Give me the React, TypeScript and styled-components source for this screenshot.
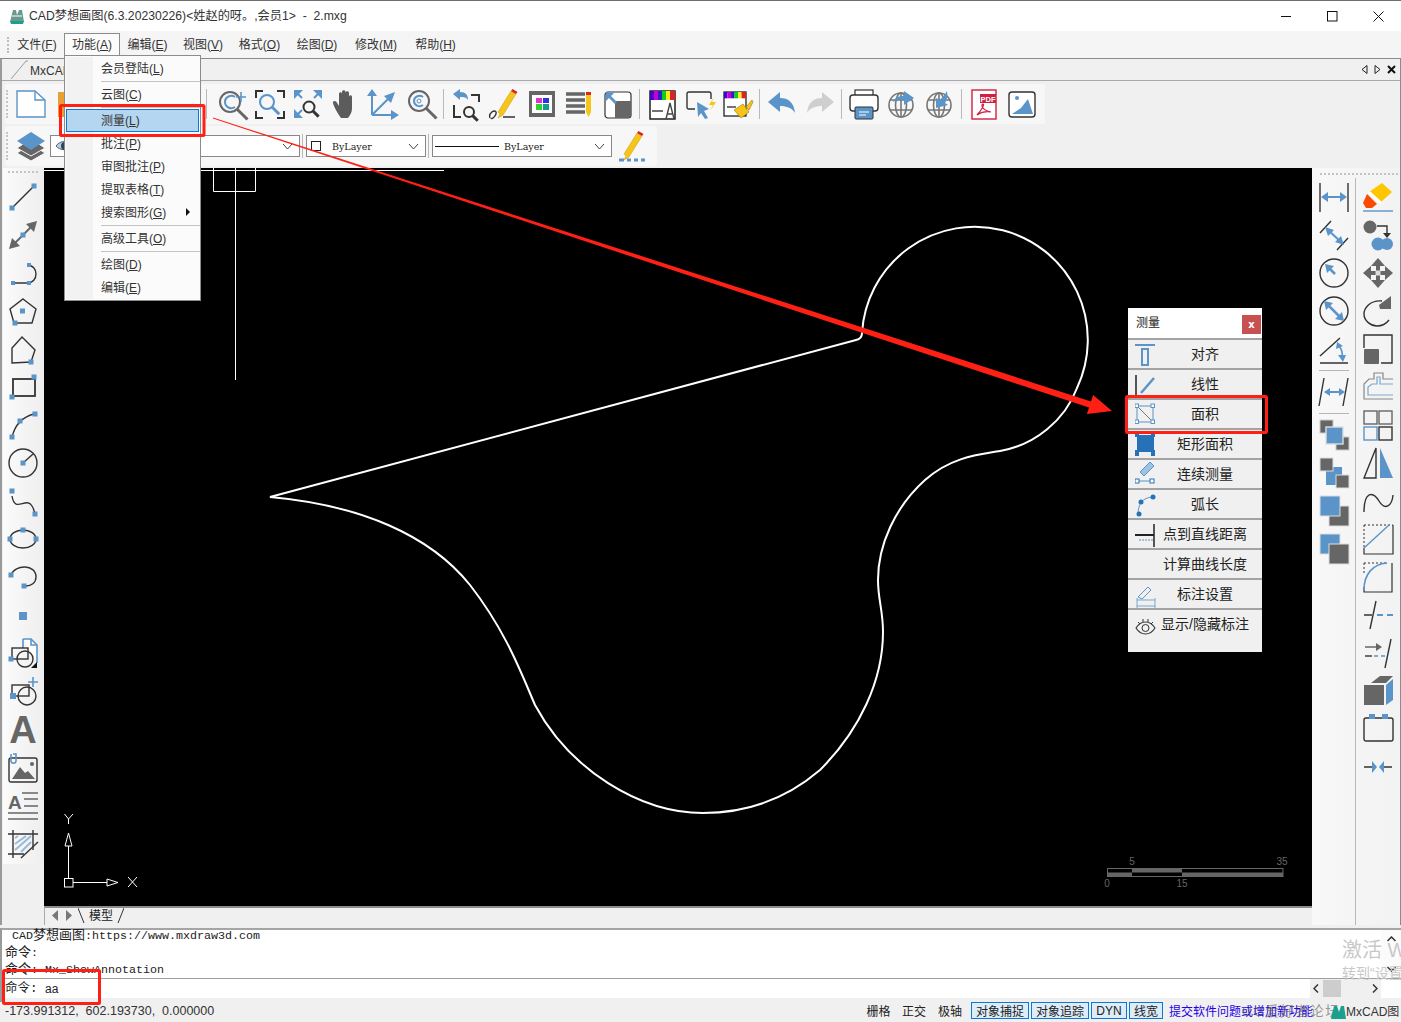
import React from "react";
import styled, { createGlobalStyle } from "styled-components";

const BLUE = "#5a94c8";
const DARK = "#333";
const GREY = "#666";
const YEL = "#f6c41c";

const Global = createGlobalStyle`
  html, body { margin: 0; padding: 0; background: #f0f0f0; }
  body { font-family: "Liberation Sans", "Noto Sans CJK SC", sans-serif; font-size: 12px; color: #222; }
  * { box-sizing: border-box; }
`;

const Page = styled.div`
  position: relative; width: 1401px; height: 1022px; overflow: hidden;
  display: flex; flex-direction: column; background: #f0f0f0; border-top: 1px solid #6e6e6e;
`;
const TitleBar = styled.header`
  height: 30px; flex: none; background: #fff; display: flex; align-items: center; padding-left: 9px;
`;
const TitleText = styled.span` margin-left: 4px; font-size: 12.2px; color: #333; white-space: pre; padding-bottom: 3px; `;
const WinControls = styled.div` margin-left: auto; display: flex; `;
const WinButton = styled.div`
  width: 46px; height: 30px; display: flex; align-items: center; justify-content: center;
`;
const MenuBar = styled.nav`
  height: 27px; flex: none; background: #f5f5f5; display: flex; align-items: center; padding-left: 7px; position: relative;
`;
const Grip = styled.i`
  width: 2px; height: 16px; flex: none; border-left: 2px dotted #bbb; margin-right: 5px;
`;
const MenuItem = styled.div<{ $open?: boolean; $w: number }>`
  width: ${p => p.$w}px; height: 25px; margin-top: 2px; padding-bottom: 5px; display: flex; align-items: center; justify-content: center;
  font-size: 12px; color: #333; white-space: nowrap;
  border: 1px solid ${p => (p.$open ? "#8c8c8c" : "transparent")};
  border-bottom: none; background: ${p => (p.$open ? "#fbfbfb" : "transparent")};
`;
const DocArea = styled.div`
  flex: 1; min-height: 0; display: flex; flex-direction: column; border-top: 1px solid #8a8a93; border-left: 2px solid #9a9a9a; border-right: 1px solid #8a8a93;
`;
const TabStrip = styled.div`
  height: 22px; flex: none; display: flex; align-items: flex-end; border-bottom: 1px solid #a8a8ae; padding-left: 9px; background: #f0f0f0;
`;
const DocTab = styled.div`
  height: 21px; display: flex; align-items: center; font-size: 12px; color: #333; gap: 2px;
`;
const DocTabName = styled.span` padding-top: 3px; `;
const TabArrows = styled.div`
  margin-left: auto; height: 21px; display: flex; align-items: center; gap: 6px; padding-right: 4px;
`;
const ToolBand = styled.section`
  height: 87px; flex: none; background: #f0f0f0; display: flex; flex-direction: column; gap: 2px; padding: 3px 0 0 3px; 
`;
const ToolRow = styled.div<{ $w: number }>`
  width: ${p => p.$w}px; height: 40px; display: flex; align-items: center; background: #f7f7f7; border-radius: 3px; padding-left: 1px;
`;
const HGrip = styled.i` width: 2px; height: 28px; border-left: 2px dotted #c4c4c4; margin-right: 4px; flex: none; `;
const ToolBtn = styled.div`
  width: 38px; height: 34px; flex: none; display: flex; align-items: center; justify-content: center;
`;
const Sep = styled.i<{ $wide?: boolean }>`
  width: 1px; height: 30px; background: #b9b9b9; flex: none; margin: 0 ${p => (p.$wide ? "6px" : "3px")} 0 ${p => (p.$wide ? "6px" : "2px")};
`;
const ComboSep = styled.i` width: 1px; height: 24px; background: #b9b9b9; flex: none; margin: 0 2px; `;
const RowGap = styled.i<{ $w: number }>` width: ${p => p.$w}px; flex: none; `;
const Combo = styled.div<{ $w: number }>`
  width: ${p => p.$w}px; height: 22px; flex: none; background: #fff; border: 1px solid #888; display: flex; align-items: center;
  padding: 0 6px 0 4px; font-family: "DejaVu Serif", "Noto Sans CJK SC", serif; font-size: 9.5px; color: #222; gap: 8px;
`;
const Swatch = styled.i` width: 10px; height: 10px; border: 1px solid #222; flex: none; margin-right: 3px; `;
const LineSample = styled.i` width: 64px; border-top: 1px solid #111; flex: none; margin: 0 -3px 0 -2px; `;
const Chevron = styled.svg` margin-left: auto; flex: none; `;
const Work = styled.div` flex: 1; min-height: 0; display: flex; `;
const LeftBar = styled.aside`
  width: 42px; flex: none; background: #f0f0f0; padding: 0 0 0 1px;
`;
const LeftTools = styled.div`
  background: linear-gradient(90deg, #fbfbfb, #eeeeee); display: flex; flex-direction: column; align-items: center; padding: 3px 1px 0 0; height: 696px; width: 41px;
`;
const TopGrip = styled.i` width: 30px; height: 2px; border-top: 2px dotted #c4c4c4; flex: none; margin: 0 0 5px; `;
const SideBtn = styled.div`
  width: 38px; height: 38px; flex: none; display: flex; align-items: center; justify-content: center;
`;
const Center = styled.main` flex: 1; min-width: 0; display: flex; flex-direction: column; `;
const Canvas = styled.svg` flex: 1; min-height: 0; width: 100%; background: #000; display: block; `;
const ModelTabs = styled.div`
  height: 19px; flex: none; border-top: 2px solid #8c8c8c; border-left: 1px solid #aaa; background: #f0f0f0; display: flex; align-items: center; padding: 0 0 2px 4px;
`;
const NavBox = styled.div` display: flex; align-items: center; gap: 6px; width: 29px; height: 15px; padding-left: 2px; `;
const ModelName = styled.span` font-size: 12px; color: #222; padding: 0 4px 3px 4px; `;
const RightBar = styled.aside`
  width: 88px; flex: none; background: linear-gradient(90deg, #f8f8f8, #f2f2f2); display: flex; flex-direction: column; padding-top: 5px;
`;
const RightColumns = styled.div` display: flex; flex: 1; padding-top: 3px; `;
const RightCol = styled.div<{ $line?: boolean }>`
  width: 44px; display: flex; flex-direction: column; align-items: center;
  border-right: ${p => (p.$line ? "1px solid #b8b8b8" : "none")}; flex: none;
`;
const ColSep = styled.i` width: 30px; height: 1px; margin: 2px 0; background: #b5b5b5; flex: none; `;
const GripRight = styled.i` width: 78px; margin-left: 8px; height: 2px; border-top: 2px dotted #c4c4c4; flex: none; `;
const CmdPanel = styled.section`
  height: 74px; flex: none; border-top: 2px solid #a5a5a5; margin-top: 3px; background: #fff; display: flex; flex-direction: column; border-left: 2px solid #9a9a9a; position: relative;
`;
const History = styled.div`
  height: 49px; flex: none; padding: 0 0 0 3px; font-family: "Liberation Mono", "Noto Sans CJK SC", monospace; font-size: 11.67px; line-height: 12px; color: #222; border-bottom: 1px solid #9f9f9f; position: relative; white-space: pre;
`;
const HistoryLine = styled.div` height: 17px; `;
const Cjk = styled.span` font-size: 13px; `;
const VScroll = styled.div`
  position: absolute; right: 0; top: 0; bottom: 0; width: 20px; display: flex; flex-direction: column; justify-content: space-between; align-items: center; padding: 6px 0; background: rgba(245,245,245,.4);
`;
const InputRow = styled.div`
  height: 19px; flex: none; display: flex; align-items: center; padding-left: 3px; font-size: 12px; color: #222; position: relative;
`;
const Prompt = styled.span` font-family: "Liberation Mono", "Noto Sans CJK SC", monospace; font-size: 12.5px; width: 40px; flex: none; padding-bottom: 4px; `;
const HScroll = styled.div`
  position: absolute; right: 20px; top: 0; width: 71px; height: 19px; background: #f0f0f0; display: flex; align-items: center; justify-content: space-between; padding: 0 3px;
`;
const Thumb = styled.i` width: 18px; height: 17px; background: #cdcdcd; flex: none; margin-left: -12px; margin-right: 16px; `;
const CmdFoot = styled.i` flex: 1; background: #f0f0f0; `;
const StatusBar = styled.footer`
  height: 20px; flex: none; display: flex; align-items: center; padding: 0 0 3px 5px; background: #f0f0f0; font-size: 12px; color: #222; position: relative; white-space: nowrap;
`;
const Coords = styled.span` white-space: pre; width: 861px; flex: none; color: #333; font-size: 12.5px; `;
const StatusBtn = styled.span<{ $on?: boolean; $w: number }>`
  width: ${p => p.$w}px; height: 17px; flex: none; display: flex; align-items: center; justify-content: center; margin-right: 2px;
  border: 1px solid ${p => (p.$on ? "#0a78d4" : "transparent")}; background: ${p => (p.$on ? "#dcecf8" : "transparent")}; color: #222; letter-spacing: 0;
`;
const StatusLink = styled.span` color: #2200e8; margin-left: 4px; `;
const StatusBrand = styled.span` margin-left: 33px; color: #333; `;
const Watermark = styled.span`
  position: absolute; left: 1242px; top: -2px; font-size: 13.5px; color: rgba(90,90,90,.62); letter-spacing: 1.5px;
`;
const BrandLogo = styled.svg` position: absolute; left: 1331px; top: 3px; `;
const ActivateBig = styled.div`
  position: absolute; left: 1342px; top: 933px; font-size: 20px; color: #c8c8c8; white-space: nowrap;
`;
const ActivateSmall = styled.div`
  position: absolute; left: 1342px; top: 961px; font-size: 14px; color: #c8c8c8; white-space: nowrap;
`;
const Dropdown = styled.div`
  position: absolute; left: 64px; top: 54px; width: 137px; height: 246px; background: #fbfbfb; border: 1px solid #8c8c8c; padding-top: 1px; display: flex; flex-direction: column;
  &::before { content: ""; position: absolute; left: 1px; top: 1px; bottom: 1px; width: 27px; background: #f2f2f2; }
`;
const DropItem = styled.div<{ $active?: boolean }>`
  position: relative; height: 23px; flex: none; display: flex; align-items: center; padding: 0 0 2px 34px; font-size: 12px; color: #333; white-space: nowrap;
  border: 1px solid ${p => (p.$active ? "#0a78d4" : "transparent")}; margin: 0 1px; background: ${p => (p.$active ? "#b4d6f1" : "transparent")};
`;
const SubArrow = styled.i`
  position: absolute; right: 8px; top: 6px; border-left: 4px solid #111; border-top: 4px solid transparent; border-bottom: 4px solid transparent;
`;
const DropSep = styled.i` height: 3px; flex: none; margin-left: 36px; border-top: 1px solid #c4c4c4; margin-top: 1px; margin-bottom: -1px; `;
const Palette = styled.div`
  position: absolute; left: 1128px; top: 307px; width: 134px; height: 344px; background: #f0f0f0; display: flex; flex-direction: column;
`;
const PaletteHead = styled.div`
  height: 30px; flex: none; background: #fff; display: flex; align-items: center; padding: 0 1px 0 8px; font-size: 12px; color: #222; justify-content: space-between;
`;
const PaletteTitle = styled.span` padding-bottom: 3px; `;
const CloseBtn = styled.div`
  width: 19px; height: 19px; background: #c75050; color: #fff; font-size: 10px; font-weight: 700; display: flex; align-items: center; justify-content: center; font-family: "DejaVu Sans", sans-serif; margin-top: 2px;
`;
const PaletteRow = styled.div`
  position: relative; height: 30px; flex: none; border-top: 2px solid #a3a3a3; background: #f0f0f0; display: flex; align-items: center; justify-content: center; padding: 0 0 2px 20px; font-size: 14px; color: #222; white-space: nowrap;
`;
const PaletteIcon = styled.svg` position: absolute; left: 7px; bottom: -1px; `;
const Annotation = styled.svg` position: absolute; left: 0; top: -1px; pointer-events: none; `;
const Ic = styled.svg` display: block; overflow: visible; `;

const Sq = ({ x, y, s = 5, c = BLUE }: { x: number; y: number; s?: number; c?: string }) => (
  <rect x={x - s / 2} y={y - s / 2} width={s} height={s} fill={c} />
);
const S = { fill: "none", stroke: DARK, strokeWidth: 1.4 };
const SB = { fill: "none", stroke: BLUE, strokeWidth: 1.6 };
const Mag = ({ x, y, r = 8, c = GREY, w = 2 }: { x: number; y: number; r?: number; c?: string; w?: number }) => (
  <g>
    <circle cx={x} cy={y} r={r} fill="none" stroke={c} strokeWidth={w} />
    <line x1={x + r * 0.72} y1={y + r * 0.72} x2={x + r * 1.75} y2={y + r * 1.75} stroke={c} strokeWidth={w + 1} />
  </g>
);
const Bars = () => (
  <g>
    <rect x="0" y="0" width="4" height="9" fill="#40c" />
    <rect x="4" y="0" width="4" height="9" fill="#c0c" />
    <rect x="8" y="0" width="4" height="9" fill="#22c" />
    <rect x="12" y="0" width="4" height="9" fill="#1c1" />
    <rect x="16" y="0" width="4" height="9" fill="#ee2" />
    <rect x="20" y="0" width="5" height="9" fill="#d22" />
  </g>
);
const Globe = () => (
  <g fill="none" stroke="#777" strokeWidth="1.6">
    <circle cx="14" cy="16" r="12" />
    <ellipse cx="14" cy="16" rx="5.5" ry="12" />
    <path d="M3 11H25M3 21H25M14 4V28" />
  </g>
);
const Pencil = () => (
  <g>
    <path d="M9 25L7 23 20 2 25 5 12 26 7 29Z" fill={YEL} stroke="#c99b00" strokeWidth=".5" />
    <path d="M20 2l1.5-2 5 3-1.5 2Z" fill="#d22" />
  </g>
);

const icons: Record<string, React.ReactNode> = {
  line: <g><line x1="5" y1="25" x2="25" y2="5" {...S} /><Sq x={4} y={26} /><Sq x={26} y={4} /></g>,
  dbl: <g><line x1="6" y1="24" x2="24" y2="6" stroke={GREY} strokeWidth="2" /><path d="M1 29L4 18 12 26Z" fill={GREY} /><path d="M29 1L18 4 26 12Z" fill={GREY} /><Sq x={15} y={15} /></g>,
  hook: <g><path d="M5 25H19C31 25 31 7 19 7" {...S} /><Sq x={5} y={25} s={4} /><Sq x={21} y={25} s={4} /><Sq x={21} y={7} s={4} /></g>,
  penta: <g><path d="M15 3L28 13 24 27H6L2 13Z" {...S} /><Sq x={14.5} y={15} /><Sq x={7} y={27} /></g>,
  poly: <g><path d="M14 3L27 16 23 28 4 29V14Z" {...S} /><Sq x={23} y={28} /></g>,
  rect: <g><rect x="5" y="7" width="22" height="17" {...S} strokeWidth={1.8} /><Sq x={26} y={5} /><Sq x={4} y={25} /></g>,
  arc: <g><path d="M4 27C7 15 14 7 26 4" {...S} /><Sq x={4} y={27} /><Sq x={12} y={11} /><Sq x={27} y={4} /></g>,
  circ: <g><circle cx="15" cy="15" r="14" {...S} /><line x1="15" y1="15" x2="25" y2="6" {...S} /><Sq x={15} y={15} /></g>,
  spline: <g><path d="M4 10C7 28 18 10 24 20 27 25 27 28 27 30" {...S} /><Sq x={4} y={5} /><Sq x={27} y={28} /></g>,
  ellipse: <g><ellipse cx="15" cy="15" rx="13" ry="9" {...S} /><Sq x={15} y={6} /><Sq x={2} y={15} /><Sq x={28} y={15} /></g>,
  earc: <g><path d="M3 13C7 2 28 2 28 15 28 21 23 24 18 24" {...S} /><Sq x={3} y={13} /><Sq x={16} y={24} /></g>,
  point: <Sq x={15} y={16} s={8} />,
  block: <g><path d="M15 1H23L29 7V25" fill="#fff" stroke={BLUE} strokeWidth="1.6" /><path d="M15 1V10M23 1V7H29" {...SB} /><rect x="4" y="10" width="16" height="11" {...S} /><circle cx="17" cy="21" r="8" {...S} /><Sq x={3} y={21} /><path d="M29 24V30H23Z" fill="#111" /></g>,
  blockadd: <g><path d="M25 1V11M20 6H30" {...SB} /><rect x="4" y="9" width="17" height="11" {...S} /><circle cx="19" cy="20" r="9" {...S} /><Sq x={5} y={20} s={6} /></g>,
  text: <text x="15" y="29" textAnchor="middle" fontFamily="Liberation Sans" fontWeight="700" fontSize="38" fill={GREY}>A</text>,
  image: <g><rect x="1" y="6" width="28" height="24" rx="2" {...S} /><path d="M4 27L12 15 17 21 20 19 27 27Z" fill={GREY} /><circle cx="24" cy="12" r="2" fill={GREY} /><path d="M3 2V9C3 12 8 12 8 9V2H5" {...SB} /></g>,
  mtext: <g><text x="0" y="19" fontFamily="Liberation Sans" fontWeight="700" fontSize="19" fill={GREY}>A</text><path d="M14 3H30M16 9H30M16 16H30M0 23H30M0 29H30" fill="none" stroke={GREY} strokeWidth="1.4" /></g>,
  hatch: <g><path d="M5 2V30M25 2V22M0 6H30M0 26H16" {...S} /><path d="M7 22L23 8M7 16L18 8M13 24L23 14M7 10L10 8" stroke={BLUE} strokeWidth="2" opacity=".6" /><path d="M13 30L30 14" {...S} /></g>,
  fnew: <g><path d="M1 2H19L29 11V28H1Z" fill="#fff" stroke={BLUE} strokeWidth="1.4" /><path d="M19 2V11H29" fill="none" stroke={BLUE} strokeWidth="1.4" /></g>,
  fopen: <rect x="4" y="3" width="24" height="25" fill="#e8a030" />,
  zplus: <g><Mag x={13} y={13} r={10} /><path d="M18 8C14 5 8 8 8 13S14 21 18 18" {...SB} strokeWidth={2} /><path d="M24 3V13M19 8H29" {...SB} /></g>,
  zwin: <g><path d="M8 2H1V9M22 2H29V9M8 29H1V22M22 29H29V22" fill="none" stroke={DARK} strokeWidth="2" /><Mag x={12} y={13} r={7} c={BLUE} /></g>,
  zext: <g><path d="M1 1H10L1 10ZM29 1V10L20 1ZM1 29V20L10 29Z" fill={BLUE} /><path d="M3 3L9 9M27 3L21 9M3 27L9 21" stroke={BLUE} strokeWidth="2" /><Mag x={16} y={18} r={5.5} c="#333" /></g>,
  pan: <path d="M10 29C7 25 3 18 2 14c-.5-2 2-3 3.500-1l2.500 4V5c0-2.500 3-2.500 3 0v8V3c0-2.500 3.500-2.500 3.500 0v10V4c0-2.500 3.500-2.500 3.500 0v10V8c0-2.500 3-2.500 3 0v11c0 5-2 7-4 10Z" fill="#5c5c5c" />,
  ucs: <g><path d="M3 26V5M3 26H25M3 26L21 8" fill="none" stroke={BLUE} strokeWidth="2" /><path d="M3 0L8 7H-2ZM30 26L22 21V31ZM26 3L15 7 22 14Z" fill={BLUE} /></g>,
  zcirc: <g><Mag x={12} y={12} r={10} /><path d="M16 8C12 5 7 8 7 12S12 19 16 16" {...SB} strokeWidth={2} /><circle cx="12" cy="12" r="2" fill="none" stroke={BLUE} /></g>,
  zprev: <g><path d="M20 6H28V13M3 16V28H10" fill="none" stroke={DARK} strokeWidth="2" /><Mag x={18} y={23} r={5} c="#333" /><path d="M2 5L9 0V3C15 3 17 6 17 11 15 8 13 8 9 8V11Z" fill={BLUE} /></g>,
  sign: <g transform="translate(2 0)"><Pencil /><path d="M-1 29C-3 24 4 20 5 23S1 31 0 29M12 28H24" fill="none" stroke={DARK} strokeWidth="1.4" /></g>,
  table: <g><rect x="2" y="2" width="26" height="26" fill={GREY} /><rect x="5" y="6" width="20" height="18" fill="#fff" /><rect x="9" y="9" width="6" height="5" fill="#e030d0" /><rect x="16" y="9" width="6" height="5" fill="#3030e0" /><rect x="9" y="15" width="6" height="6" fill="#30d030" /><rect x="16" y="15" width="6" height="6" fill="#10a090" /></g>,
  llist: <g><path d="M1 5H20M1 11H20M1 17H20M1 23H20" stroke={GREY} strokeWidth="3.500" /><path d="M21 6H26V23L23.500 28 21 23Z" fill={YEL} /><rect x="21" y="3" width="5" height="3" fill="#d22" /></g>,
  split: <g><rect x="2" y="3" width="26" height="26" rx="3" fill="#fff" stroke={DARK} strokeWidth="1.2" /><path d="M12 12H28V26Q28 29 25 29H12Z" fill={GREY} /><path d="M3 3L11 4 8 7 14 13 12 15 6 9 3 12Z" fill={BLUE} /></g>,
  colorA: <g><rect x="3" y="2" width="25" height="28" fill="#fff" stroke="#111" strokeWidth="1.4" /><g transform="translate(3 2)"><Bars /></g><path d="M5 22H16M19 30L23 14 27 30M21 25H25" fill="none" stroke="#444" strokeWidth="1.400" /></g>,
  select: <g><path d="M10 20H4Q2 20 2 18V5Q2 3 4 3H24Q26 3 26 5V10" fill="none" stroke={DARK} strokeWidth="1.4" /><path d="M12 13L24 20 19 22 23 29 20 30 16 24 13 28Z" fill={BLUE} /><path d="M29 8L24 16H28L25 22 31 13H27Z" fill={YEL} /></g>,
  brush: <g><rect x="1" y="3" width="22" height="24" fill="#fff" stroke="#111" strokeWidth="1.200" /><g transform="translate(1 3) scale(.88 .7)"><Bars /></g><path d="M4 18H13" stroke="#444" strokeWidth="1.5" /><path d="M11 21L20 15 26 23 18 29Z" fill={YEL} stroke="#a07800" strokeWidth=".6" /><path d="M23 18L29 11 30 13 26 21Z" fill={YEL} stroke="#a07800" strokeWidth=".6" /></g>,
  undo: <path d="M1 13L13 3V9C21 9 27 13 28 24 25 19 20 17 13 17V23Z" fill={BLUE} />,
  redo: <path d="M29 13L17 3V9C9 9 3 13 2 24 5 19 10 17 17 17V23Z" fill="#cfcfcf" />,
  print: <g><rect x="6" y="1" width="18" height="8" fill="#fff" stroke={DARK} strokeWidth="1.2" /><rect x="1" y="6" width="28" height="16" rx="3" fill="#fff" stroke={DARK} strokeWidth="1.4" /><rect x="6" y="18" width="18" height="12" rx="1" fill={BLUE} stroke={DARK} strokeWidth="1" /><path d="M10 23H20M10 26H17" stroke="#fff" strokeWidth="1.200" /></g>,
  gout: <g><Globe /><path d="M6 13C8 8 12 7 17 7V2L27 9 17 16V11C13 11 10 11 6 13Z" fill={BLUE} /></g>,
  gin: <g><Globe /><path d="M22 2C23 7 22 11 20 14L23 16 11 19 11 9 15 11C17 8 20 6 22 2Z" fill={BLUE} /></g>,
  pdf: <g><rect x="3" y="1" width="24" height="29" fill="#fff" stroke="#d02040" strokeWidth="1.4" /><rect x="11" y="5" width="16" height="9" fill="#d02040" /><text x="19" y="12.500" textAnchor="middle" fontFamily="Liberation Sans" fontWeight="700" fontSize="7.500" fill="#fff">PDF</text><path d="M8 26C12 22 16 15 14 15S12 21 22 23C16 22 11 24 8 26Z" fill="none" stroke="#d02040" strokeWidth="1.200" /></g>,
  pic: <g><rect x="2" y="3" width="26" height="25" rx="3" fill="#fff" stroke={DARK} strokeWidth="1.400" /><path d="M5 25L14 19 21 10 26 25Z" fill={BLUE} /><circle cx="10" cy="9" r="2" fill={BLUE} /></g>,
  layers: <g><path d="M1 22L15 13 29 22 15 30Z" fill={GREY} stroke="#f7f7f7" /><path d="M1 17L15 8 29 17 15 25Z" fill={GREY} stroke="#f7f7f7" /><path d="M1 10L15 1 29 10 15 19Z" fill={BLUE} /></g>,
  penline: <g><Pencil /><path d="M2 29H7M10 29H14M17 29H21M24 29H28" stroke={BLUE} strokeWidth="3" /></g>,
  dimH: <g><path d="M1 1V30M29 1V30" {...S} /><path d="M5 15H25" {...SB} strokeWidth={2} /><path d="M2 15L9 10V20ZM28 15L21 10V20Z" fill={BLUE} /></g>,
  dimA: <g><path d="M1 13L12 1M18 30L29 18" {...S} /><path d="M8 9L23 23" {...SB} strokeWidth={2} /><path d="M6 7L15 10 9 16ZM25 25L16 22 22 16Z" fill={BLUE} /></g>,
  dimR: <g><circle cx="15" cy="15" r="14" {...S} /><path d="M8 8L16 16" {...SB} strokeWidth={2.500} /><path d="M6 6L15 8 8 15Z" fill={BLUE} /></g>,
  dimD: <g><circle cx="15" cy="15" r="14" {...S} /><path d="M8 8L22 22" {...SB} strokeWidth={2.500} /><path d="M5 5L14 7 7 14ZM25 25L16 23 23 16Z" fill={BLUE} /></g>,
  dimAng: <g><path d="M1 22L21 4M1 29H29" {...S} /><path d="M19 11C23 15 24 19 23 24" {...SB} /><path d="M18 8L24 12 17 15ZM24 28L19 21 27 21Z" fill={BLUE} /></g>,
  dimJ: <g><path d="M5 1L0 29M29 1L24 29" {...S} /><path d="M6 15H24" {...SB} strokeWidth={2} /><path d="M5 15L11 11V19ZM26 15L20 11V19Z" fill={BLUE} /></g>,
  cp1: <g><rect x="1" y="0" width="13" height="13" fill={GREY} stroke="#ccc" /><rect x="17" y="17" width="13" height="13" fill={GREY} stroke="#ccc" /><rect x="7" y="7" width="17" height="17" fill={BLUE} stroke="#ddd" strokeWidth="1.400" /></g>,
  cp2: <g><rect x="7" y="9" width="16" height="18" fill={BLUE} /><rect x="1" y="0" width="13" height="13" fill={GREY} stroke="#ddd" /><rect x="17" y="17" width="13" height="13" fill={GREY} stroke="#ddd" /></g>,
  cp3: <g><rect x="10" y="10" width="20" height="20" fill={GREY} stroke="#ddd" /><rect x="1" y="0" width="20" height="20" fill={BLUE} stroke="#ddd" /></g>,
  cp4: <g><rect x="1" y="0" width="20" height="20" fill={BLUE} stroke="#ddd" /><rect x="10" y="10" width="20" height="20" fill={GREY} stroke="#ddd" /></g>,
  eraser: <g><path d="M19 1L29 10 18 20 6 10Z" fill="#ffc600" /><path d="M4 12L14 22 9 26H3L0 21Z" fill="#f84a00" /><path d="M6 10L18 21" stroke="#fff" strokeWidth="2.500" /><path d="M0 29H30" stroke={BLUE} strokeWidth="1.400" /></g>,
  match: <g><circle cx="7" cy="7" r="6.500" fill={GREY} /><path d="M14 6H24V14" fill="none" stroke={DARK} strokeWidth="1.400" /><path d="M20 13H28L24 18Z" fill={DARK} /><circle cx="15" cy="24" r="6.500" fill={BLUE} /><path d="M22 18A6.500 6.500 0 0 1 22 30" fill="none" stroke="#fff" /><circle cx="24" cy="24" r="6" fill={BLUE} /></g>,
  move: <g><path d="M15 0L22 8H8ZM15 30L22 22H8ZM0 15L8 8V22ZM30 15L22 8V22Z" fill={GREY} /><path d="M15 5V25M5 15H25" stroke={GREY} strokeWidth="4" /><rect x="12.500" y="12.500" width="5" height="5" fill="#ddd" /></g>,
  rotate: <g><path d="M19 5C6 4 1 13 1 18 1 25 8 30 14 30 20 30 23 28 26 24" fill="none" stroke={DARK} strokeWidth="1.400" /><path d="M16 9L28 0V13H17Z" fill={GREY} /></g>,
  scale: <g><path d="M1 14V1H29V29H18" fill="none" stroke={DARK} strokeWidth="1.400" /><rect x="1" y="15" width="15" height="15" rx="1" fill={GREY} /></g>,
  offset: <g><path d="M30 7H20V1H11V7H6L1 12V27H30" fill="none" stroke="#888" strokeWidth="1.200" /><path d="M30 12H17V5H14V12H9L5 15V23H30" fill="none" stroke={BLUE} strokeWidth="1.200" opacity=".8" /></g>,
  array: <g fill="none" stroke={GREY} strokeWidth="1.400"><rect x="1" y="1" width="13" height="13" /><rect x="16" y="1" width="13" height="13" /><rect x="1" y="17" width="13" height="13" stroke={BLUE} /><rect x="16" y="17" width="13" height="13" stroke="#333" /></g>,
  mirror: <g><path d="M13 0V30H1Z" fill="none" stroke={DARK} strokeWidth="1.400" /><path d="M17 0V30H30Z" fill={BLUE} /></g>,
  wave: <path d="M1 26C1 5 10 5 16 15S29 20 30 9" fill="none" stroke={DARK} strokeWidth="1.400" />,
  chamfer: <g><path d="M30 1V30H1V24" fill="none" stroke={DARK} strokeWidth="1.200" /><path d="M1 1H30M1 1V24" fill="none" stroke={DARK} strokeDasharray="2 2" /><path d="M1 24L26 1" stroke={BLUE} strokeWidth="1.400" /></g>,
  fillet: <g><path d="M29 1V30H1V25" fill="none" stroke={DARK} strokeWidth="1.200" /><path d="M1 1H24M1 1V12" fill="none" stroke={DARK} strokeDasharray="2 2" /><path d="M1 28C1 12 10 2 24 1" {...SB} /></g>,
  brk: <g><path d="M13 1L7 29M1 15H9" {...S} /><path d="M14 15H20M24 15H30" {...SB} strokeWidth={2} /></g>,
  extend: <g><path d="M2 9H16" stroke={GREY} strokeWidth="1.500" /><path d="M19 9L13 5V13Z" fill={GREY} /><path d="M2 18H9" {...S} /><path d="M11 18H15M18 18H22" {...SB} /><path d="M28 1L22 30" {...S} /></g>,
  box3d: <g><path d="M8 7L17 0H30L23 7Z" fill={GREY} /><rect x="1" y="9" width="20" height="20" fill={GREY} /><path d="M23 9L30 3V24L23 29Z" fill={BLUE} /></g>,
  group: <g><rect x="1" y="4" width="29" height="23" rx="2" {...S} /><rect x="6" y="0" width="6" height="5" fill={BLUE} /><rect x="19" y="0" width="6" height="5" fill={BLUE} /></g>,
  join: <g><path d="M1 15H11M19 15H29" {...S} /><path d="M14 15L9 9V21ZM16 15L21 9V21Z" fill={BLUE} /></g>,
};

const Icon = ({ n }: { n: string }) => (
  <Ic width="30" height="30" viewBox="0 0 30 30">{icons[n]}</Ic>
);

const palIcons: Record<string, React.ReactNode> = {
  align: <g><path d="M0 6H20" stroke={BLUE} strokeWidth="2" /><rect x="7" y="10" width="6" height="16" fill="none" stroke={BLUE} strokeWidth="2" /></g>,
  linear: <g><path d="M1 6V28" stroke="#222" strokeWidth="1.500" /><path d="M6 24L19 9" stroke={BLUE} strokeWidth="2.500" /></g>,
  area: <g><rect x="2" y="7" width="16" height="16" fill="none" stroke={BLUE} strokeWidth="1" /><path d="M2 7L18 23" stroke="#777" strokeWidth="1" /><g fill="#fff" stroke={BLUE}><rect x="0" y="5" width="3.500" height="3.500" /><rect x="16" y="5" width="3.500" height="3.500" /><rect x="0" y="21" width="3.500" height="3.500" /><rect x="16" y="21" width="3.500" height="3.500" /></g></g>,
  rectArea: <g><rect x="2" y="6" width="17" height="17" fill="#2572b8" /><rect x="0" y="3" width="4" height="5" fill="#2572b8" /><rect x="16" y="3" width="4" height="5" fill="#2572b8" /><rect x="0" y="21" width="4" height="6" fill="#2572b8" /><rect x="16" y="21" width="4" height="6" fill="#2572b8" /></g>,
  cont: <g><path d="M5 13L15 3 19 7 9 17Z" fill="#9cc3e4" stroke={BLUE} /><path d="M2 22H18" stroke={BLUE} /><rect x="0" y="20" width="4" height="4" fill="#fff" stroke="#2572b8" /><rect x="15" y="20" width="4" height="4" fill="#fff" stroke="#2572b8" /></g>,
  arcLen: <g><path d="M3 26C3 14 8 9 17 8" fill="none" stroke={BLUE} /><circle cx="4" cy="25" r="2.500" fill="#2572b8" /><circle cx="6" cy="13" r="2.500" fill="#2572b8" /><circle cx="18" cy="8" r="2.500" fill="#2572b8" /></g>,
  dist: <g><path d="M19 5V28" stroke="#222" strokeWidth="1.500" /><path d="M0 16H19" stroke="#222" strokeWidth="2" /><path d="M4 21H18" stroke={BLUE} strokeDasharray="2 1" /></g>,
  none: null,
  setting: <g><path d="M3 18L13 8 16 11 7 20Z" fill="none" stroke={BLUE} /><path d="M2 21H20M2 27H20M2 19V29M20 19V29" stroke={BLUE} strokeWidth=".8" /></g>,
  eye: <g><path d="M1 19C6 11 15 11 20 19 15 27 6 27 1 19Z" fill="none" stroke="#333" strokeWidth="1.100" /><circle cx="10.500" cy="19" r="3.500" fill="none" stroke="#333" /><path d="M3 13L5 15M8 10V13M13 10V13M18 13L16 15" stroke="#333" /></g>,
};

const paletteRows: [string, string][] = [
  ["对齐", "align"], ["线性", "linear"], ["面积", "area"], ["矩形面积", "rectArea"], ["连续测量", "cont"],
  ["弧长", "arcLen"], ["点到直线距离", "dist"], ["计算曲线长度", "none"], ["标注设置", "setting"], ["显示/隐藏标注", "eye"],
];

const Mn = ({ t, k }: { t: string; k: string }) => <>{t}(<u>{k}</u>)</>;

const menus: [string, string, number][] = [
  ["编辑", "E", 55], ["视图", "V", 56], ["格式", "O", 57], ["绘图", "D", 58], ["修改", "M", 60], ["帮助", "H", 59],
];

const Chev = () => (
  <Chevron width="11" height="7" viewBox="0 0 11 7"><path d="M1 1L5.500 6 10 1" fill="none" stroke="#444" strokeWidth="1" /></Chevron>
);

const leftTools = ["line", "dbl", "hook", "penta", "poly", "rect", "arc", "circ", "spline", "ellipse", "earc", "point", "block", "blockadd", "text", "image", "mtext", "hatch"];
const col2 = ["eraser", "match", "move", "rotate", "scale", "offset", "array", "mirror", "wave", "chamfer", "fillet", "brk", "extend", "box3d", "group", "join"];

const Side = ({ n }: { n: string }) => <SideBtn><Icon n={n} /></SideBtn>;
const Tool = ({ n }: { n: string }) => <ToolBtn><Icon n={n} /></ToolBtn>;

export default function App() {
  return (
    <Page>
      <Global />
      <TitleBar>
        <Ic width="16" height="18" viewBox="0 0 16 18">
          <path d="M1 15L4 3H7L8 8 10 3H13L15 15Z" fill="#6a9a8f" />
          <path d="M1 14H15L14 17H2Z" fill="#1aa08c" />
          <path d="M3 9H13" stroke="#fff" />
        </Ic>
        <TitleText>CAD梦想画图(6.3.20230226)&lt;姓赵的呀。,会员1&gt;  -  2.mxg</TitleText>
        <WinControls>
          <WinButton><svg width="11" height="11"><path d="M0 5.500H10" stroke="#111" /></svg></WinButton>
          <WinButton><svg width="11" height="11"><rect x=".5" y=".5" width="9.500" height="9.500" fill="none" stroke="#111" /></svg></WinButton>
          <WinButton><svg width="11" height="11"><path d="M.5.5L10.500 10.500M10.500.5L.5 10.500" stroke="#111" /></svg></WinButton>
        </WinControls>
      </TitleBar>
      <MenuBar>
        <Grip />
        <MenuItem $w={46}><span><Mn t="文件" k="F" /></span></MenuItem>
        <RowGap $w={4} />
        <MenuItem $w={56} $open><span><Mn t="功能" k="A" /></span></MenuItem>
        {menus.map(([t, k, w]) => <MenuItem key={t} $w={w}><span><Mn t={t} k={k} /></span></MenuItem>)}
      </MenuBar>
      <DocArea>
        <TabStrip>
          <DocTab>
            <svg width="17" height="19" viewBox="0 0 17 19"><path d="M0 19L15 1H17" fill="none" stroke="#9a9a9a" /></svg>
            <DocTabName>MxCAD</DocTabName>
          </DocTab>
          <TabArrows>
            <svg width="7" height="9"><path d="M6 .5V8.500L1 4.500Z" fill="none" stroke="#222" /></svg>
            <svg width="7" height="9"><path d="M1 .5V8.500L6 4.500Z" fill="none" stroke="#222" /></svg>
            <svg width="9" height="9"><path d="M1 1L8 8M8 1L1 8" stroke="#111" strokeWidth="2" /></svg>
          </TabArrows>
        </TabStrip>
        <ToolBand>
          <ToolRow $w={1040}>
            <HGrip />
            <Tool n="fnew" />
            <Tool n="fopen" />
            <RowGap $w={112} />
            <Sep $wide />
            <Tool n="zplus" /><Tool n="zwin" /><Tool n="zext" /><Tool n="pan" /><Tool n="ucs" /><Tool n="zcirc" />
            <Sep />
            <Tool n="zprev" /><Tool n="sign" /><Tool n="table" /><Tool n="llist" /><Tool n="split" />
            <Sep />
            <Tool n="colorA" /><Tool n="select" /><Tool n="brush" />
            <Sep />
            <Tool n="undo" /><Tool n="redo" />
            <Sep />
            <Tool n="print" /><Tool n="gout" /><Tool n="gin" />
            <Sep />
            <Tool n="pdf" /><Tool n="pic" />
          </ToolRow>
          <ToolRow $w={652}>
            <HGrip />
            <Tool n="layers" />
            <Combo $w={250}>
              <svg width="24" height="14" viewBox="0 0 24 14"><path d="M1 7C5 1 14 1 18 7 14 12 5 12 1 7Z" fill="#bcd" stroke="#567" /><circle cx="10" cy="7" r="4" fill="#345" /></svg>
              <Chev />
            </Combo>
            <ComboSep /><RowGap $w={1} />
            <Combo $w={120}><Swatch /><span>ByLayer</span><Chev /></Combo>
            <ComboSep /><RowGap $w={1} />
            <Combo $w={180}><LineSample /><span>ByLayer</span><Chev /></Combo>
            <RowGap $w={1} />
            <Tool n="penline" />
          </ToolRow>
        </ToolBand>
        <Work>
          <LeftBar>
            <LeftTools>
              <TopGrip />
              {leftTools.map(n => <Side key={n} n={n} />)}
            </LeftTools>
          </LeftBar>
          <Center>
            <Canvas viewBox="44 168 1268 738" preserveAspectRatio="xMinYMin meet">
              <path d="M44 170.500H444M235.500 168V380M213.500 168V191.500H255.500V168" fill="none" stroke="#fff" strokeWidth="1" />
              <path
                d="M270 497L856 340Q862 339 862 333A113 113 0 1 1 1077 388C1065 420 1035 445 1000 451C975 455 950 458 925 480C895 507 878 545 878 580C878 600 883 610 883 632C883 680 860 730 820 770C785 800 745 813 703 813C640 813 570 770 535 705C520 670 505 630 470 585C430 535 360 505 270 497Z"
                fill="none" stroke="#fff" strokeWidth="2"
              />
              <g fill="none" stroke="#fff" strokeWidth="1">
                <path d="M64.500 814L68.500 819 73 814M68.500 819V824" />
                <path d="M68.500 878V846M68.500 833L65 846H72Z" />
                <rect x="64.500" y="878.500" width="8.500" height="8.500" />
                <path d="M73 882.500H107M118 882.500L107 879V886Z" />
                <path d="M128 877L137 887M137 877L128 887" />
              </g>
              <g>
                <rect x="1107.500" y="868.500" width="175.500" height="8" fill="none" stroke="#666" />
                <rect x="1132" y="869" width="50" height="3.500" fill="#666" />
                <rect x="1107" y="872.500" width="25" height="4.500" fill="#666" />
                <rect x="1182" y="872.500" width="101" height="4.500" fill="#666" />
                <g fill="#666" fontFamily="Liberation Sans" fontSize="10" textAnchor="middle">
                  <text x="1132" y="865">5</text>
                  <text x="1282" y="865">35</text>
                  <text x="1107" y="887">0</text>
                  <text x="1182" y="887">15</text>
                </g>
              </g>
            </Canvas>
            <ModelTabs>
              <NavBox>
                <svg width="8" height="11"><path d="M7 0V11L1 5.500Z" fill="#777" /></svg>
                <svg width="8" height="11"><path d="M1 0V11L7 5.500Z" fill="#777" /></svg>
              </NavBox>
              <svg width="7" height="15"><path d="M0 0L6 15" stroke="#333" /></svg>
              <ModelName>模型</ModelName>
              <svg width="7" height="15"><path d="M7 0L1 15" stroke="#333" /></svg>
            </ModelTabs>
          </Center>
          <RightBar>
            <GripRight />
            <RightColumns>
              <RightCol $line>
                <Side n="dimH" /><Side n="dimA" /><Side n="dimR" /><Side n="dimD" /><Side n="dimAng" />
                <ColSep />
                <Side n="dimJ" />
                <ColSep />
                <Side n="cp1" /><Side n="cp2" /><Side n="cp3" /><Side n="cp4" />
              </RightCol>
              <RightCol>
                {col2.map(n => <Side key={n} n={n} />)}
              </RightCol>
            </RightColumns>
          </RightBar>
        </Work>
      </DocArea>
      <CmdPanel>
        <History>
          <HistoryLine> CAD<Cjk>梦想画图</Cjk>:https://www.mxdraw3d.com</HistoryLine>
          <HistoryLine><Cjk>命令</Cjk>:</HistoryLine>
          <HistoryLine><Cjk>命令</Cjk>: Mx_ShowAnnotation</HistoryLine>
          <VScroll>
            <svg width="9" height="6"><path d="M.5 5L4.500 1 8.500 5" fill="none" stroke="#333" strokeWidth="1.500" /></svg>
            <svg width="9" height="6"><path d="M.5 1L4.500 5 8.500 1" fill="none" stroke="#333" strokeWidth="1.500" /></svg>
          </VScroll>
        </History>
        <InputRow>
          <Prompt>命令:</Prompt><span>aa</span>
          <HScroll>
            <svg width="6" height="9"><path d="M5 .5L1 4.500 5 8.500" fill="none" stroke="#333" strokeWidth="1.500" /></svg>
            <Thumb />
            <svg width="6" height="9"><path d="M1 .5L5 4.500 1 8.500" fill="none" stroke="#333" strokeWidth="1.500" /></svg>
          </HScroll>
        </InputRow>
        <CmdFoot />
      </CmdPanel>
      <StatusBar>
        <Coords>-173.991312,  602.193730,  0.000000</Coords>
        <StatusBtn $w={25}>栅格</StatusBtn>
        <RowGap $w={8} />
        <StatusBtn $w={26}>正交</StatusBtn>
        <RowGap $w={8} />
        <StatusBtn $w={26}>极轴</StatusBtn>
        <RowGap $w={6} />
        <StatusBtn $w={58} $on>对象捕捉</StatusBtn>
        <StatusBtn $w={58} $on>对象追踪</StatusBtn>
        <StatusBtn $w={36} $on>DYN</StatusBtn>
        <StatusBtn $w={34} $on>线宽</StatusBtn>
        <StatusLink>提交软件问题或增加新功能</StatusLink>
        <StatusBrand>MxCAD图</StatusBrand>
        <Watermark>UG爱好者论坛</Watermark>
        <BrandLogo width="15" height="14" viewBox="0 0 15 14"><path d="M0 14L3 1H6L8 7 10 1H13L15 14Z" fill="#1aa08c" /></BrandLogo>
      </StatusBar>

      <ActivateBig>激活 Windows</ActivateBig>
      <ActivateSmall>转到“设置”以激活 Windows。</ActivateSmall>

      <Dropdown>
        <DropItem><span><Mn t="会员登陆" k="L" /></span></DropItem>
        <DropSep />
        <DropItem><span><Mn t="云图" k="C" /></span></DropItem>
        <DropSep />
        <DropItem $active><span><Mn t="测量" k="L" /></span></DropItem>
        <DropItem><span><Mn t="批注" k="P" /></span></DropItem>
        <DropItem><span><Mn t="审图批注" k="P" /></span></DropItem>
        <DropItem><span><Mn t="提取表格" k="T" /></span></DropItem>
        <DropItem><span><Mn t="搜索图形" k="G" /></span><SubArrow /></DropItem>
        <DropSep />
        <DropItem><span><Mn t="高级工具" k="O" /></span></DropItem>
        <DropSep />
        <DropItem><span><Mn t="绘图" k="D" /></span></DropItem>
        <DropItem><span><Mn t="编辑" k="E" /></span></DropItem>
      </Dropdown>

      <Palette>
        <PaletteHead>
          <PaletteTitle>测量</PaletteTitle>
          <CloseBtn>x</CloseBtn>
        </PaletteHead>
        {paletteRows.map(([label, ic]) => (
          <PaletteRow key={label}>
            <PaletteIcon width="22" height="30" viewBox="0 0 22 30">{palIcons[ic]}</PaletteIcon>
            {label}
          </PaletteRow>
        ))}
      </Palette>

      <Annotation width="1401" height="1022" viewBox="0 0 1401 1022">
        <g fill="none" stroke="#ff2015" strokeWidth="3">
          <rect x="60.500" y="105.500" width="143.500" height="30" rx="1" />
          <rect x="1126.500" y="396.500" width="140" height="36" rx="1" />
          <rect x="3.500" y="970.500" width="96" height="33" rx="1" />
        </g>
        <polygon points="213,117.500 1091,401.400 1093.100,395 1112,411 1086.900,414 1089,407.600 213,118.500" fill="#ff2015" />
      </Annotation>
    </Page>
  );
}
